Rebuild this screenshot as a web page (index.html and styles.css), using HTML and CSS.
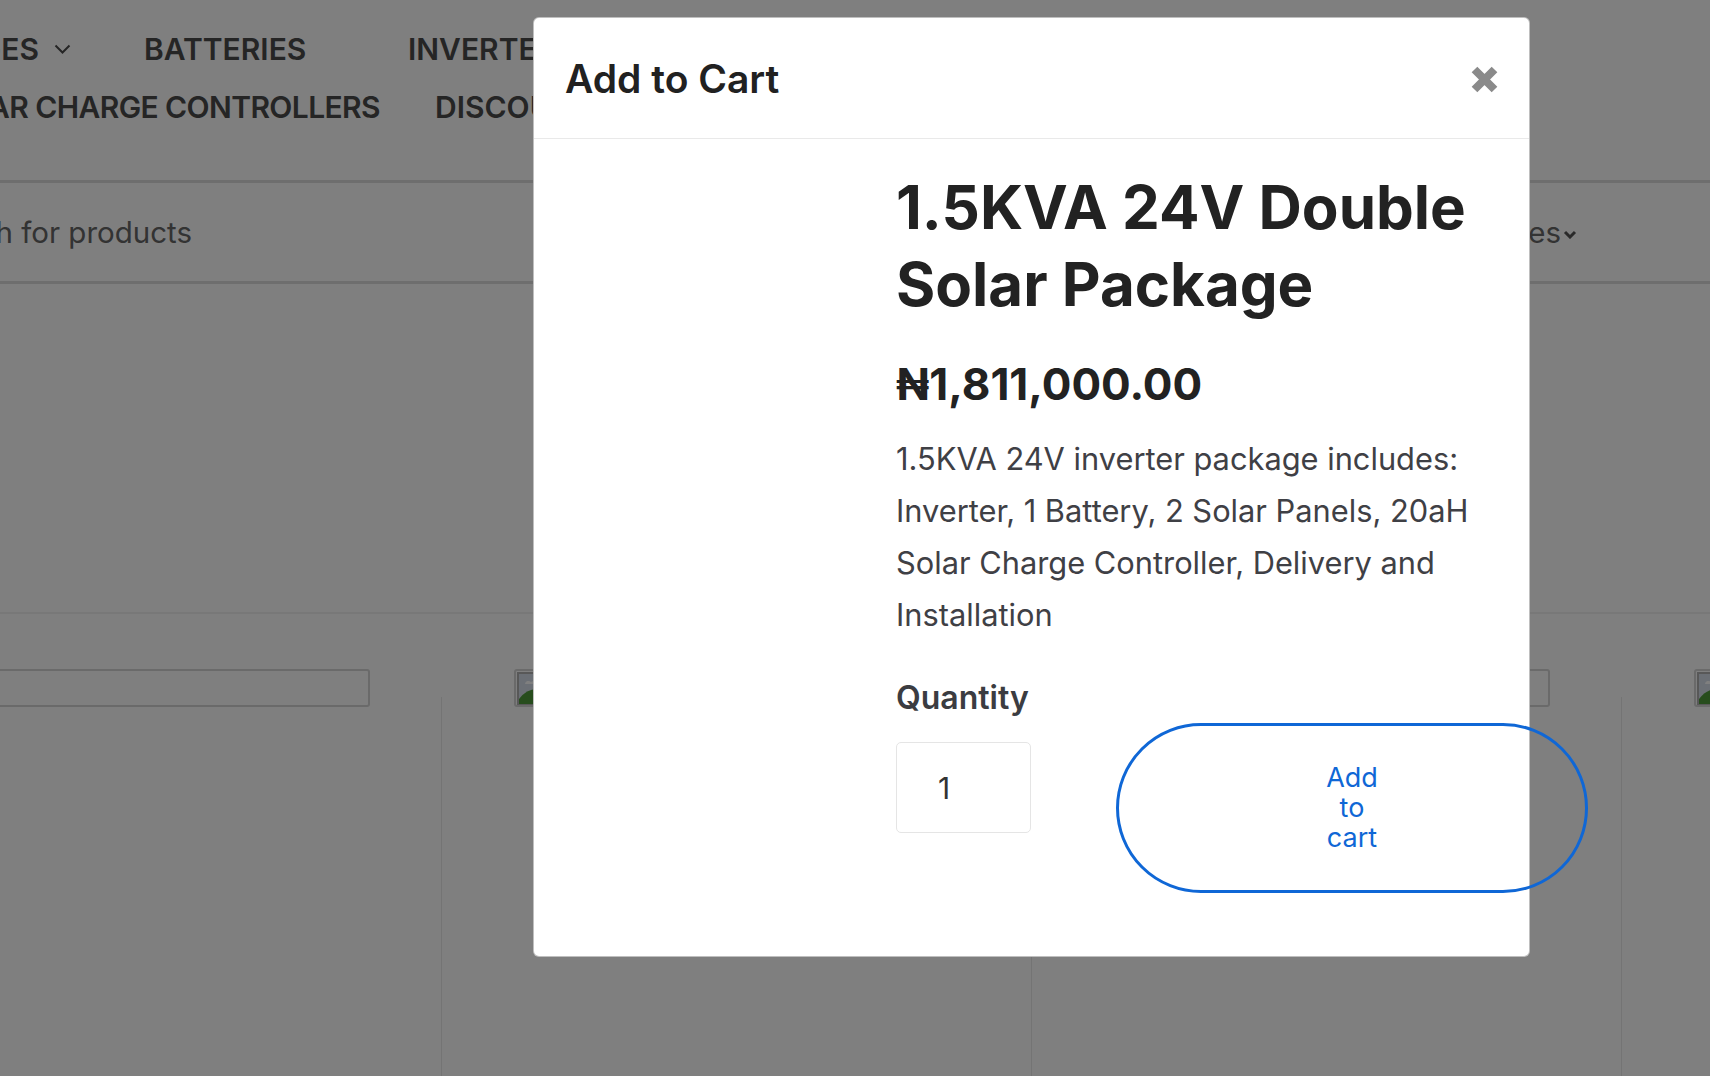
FILE: index.html
```html
<!DOCTYPE html>
<html lang="en">
<head>
<meta charset="utf-8">
<title>Add to Cart</title>
<link rel="stylesheet" href="styles.css">
</head>
<body>
<div class="page">
  <nav class="nav">
    <div class="nav-row">
      <div class="nav-lead lead1"><span>Solar Packages</span><svg class="chev" width="17" height="10" viewBox="0 0 17 10"><path d="M1.5 1.5 L8.5 8.5 L15.5 1.5" fill="none" stroke="#4a4a4a" stroke-width="2"/></svg></div>
      <a class="nav-item batt">Batteries</a>
      <a class="nav-item">Inverters</a>
    </div>
    <div class="nav-row">
      <div class="nav-lead lead2"><span>Solar Charge Controllers</span></div>
      <a class="nav-item">Discount Deals</a>
    </div>
  </nav>
  <div class="search-bar">
    <div class="search-lead">Search for products</div>
    <div class="cat">All Categories<svg class="chev-s" width="14" height="9" viewBox="0 0 14 9"><path d="M2 2 L7 7 L12 2" fill="none" stroke="#555" stroke-width="3"/></svg></div>
  </div>
  <div class="hero"></div>
  <div class="grid">
    <div class="col"><div class="pic"><svg class="broken" width="32" height="33" viewBox="0 0 32 33"><rect x="1" y="1" width="30" height="31" fill="#d6dfea" stroke="#b0b0b0" stroke-width="2"/><path d="M8 12 a3.5 3.5 0 0 1 6 -2 a3 3 0 0 1 5 2 z" fill="#fff"/><path d="M2 32 L2 27 Q10 16 22 17 L31 19 L31 32 z" fill="#4e9a3a"/></svg></div><div class="card"></div></div>
    <div class="col"><div class="pic"><svg class="broken" width="32" height="33" viewBox="0 0 32 33"><rect x="1" y="1" width="30" height="31" fill="#d6dfea" stroke="#b0b0b0" stroke-width="2"/><path d="M8 12 a3.5 3.5 0 0 1 6 -2 a3 3 0 0 1 5 2 z" fill="#fff"/><path d="M2 32 L2 27 Q10 16 22 17 L31 19 L31 32 z" fill="#4e9a3a"/></svg></div><div class="card"></div></div>
    <div class="col"><div class="pic"><svg class="broken" width="32" height="33" viewBox="0 0 32 33"><rect x="1" y="1" width="30" height="31" fill="#d6dfea" stroke="#b0b0b0" stroke-width="2"/><path d="M8 12 a3.5 3.5 0 0 1 6 -2 a3 3 0 0 1 5 2 z" fill="#fff"/><path d="M2 32 L2 27 Q10 16 22 17 L31 19 L31 32 z" fill="#4e9a3a"/></svg></div><div class="card"></div></div>
    <div class="col"><div class="pic"><svg class="broken" width="32" height="33" viewBox="0 0 32 33"><rect x="1" y="1" width="30" height="31" fill="#d6dfea" stroke="#b0b0b0" stroke-width="2"/><path d="M8 12 a3.5 3.5 0 0 1 6 -2 a3 3 0 0 1 5 2 z" fill="#fff"/><path d="M2 32 L2 27 Q10 16 22 17 L31 19 L31 32 z" fill="#4e9a3a"/></svg></div><div class="card"></div></div>
  </div>
</div>

<div class="backdrop"></div>

<div class="modal" role="dialog">
  <div class="modal-header">
    <h2 class="modal-title">Add to Cart</h2>
    <button class="close" aria-label="Close"><svg width="27" height="27" viewBox="0 0 27 27"><path d="M3.5 3.5 L23.5 23.5 M23.5 3.5 L3.5 23.5" stroke="#8a8a8a" stroke-width="8"/></svg></button>
  </div>
  <div class="modal-body">
    <div class="media"></div>
    <div class="info">
      <h1 class="product-title">1.5KVA 24V Double Solar Package</h1>
      <div class="price">₦1,811,000.00</div>
      <p class="desc">1.5KVA 24V inverter package includes: Inverter, 1 Battery, 2 Solar Panels, 20aH Solar Charge Controller, Delivery and Installation</p>
      <div class="cart-row">
        <div class="qty">
          <label class="qty-label" for="qty">Quantity</label>
          <input class="qty-input" id="qty" type="text" value="1">
        </div>
        <button class="add-btn"><span>Add to cart</span></button>
      </div>
    </div>
  </div>
</div>
</body>
</html>
```

FILE: styles.css
```css
* { box-sizing: border-box; }
html, body { margin: 0; padding: 0; }
body {
  width: 1710px;
  height: 1076px;
  overflow: hidden;
  position: relative;
  background: #fff;
  font-family: Inter, "Noto Sans", sans-serif;
}

.page { width: 1710px; height: 1076px; overflow: hidden; }

/* navigation */
.nav {
  padding: 20px 0 44px;
  border-bottom: 3px solid #dcdcdc;
}
.nav-row {
  display: flex;
  align-items: center;
  height: 58px;
  white-space: nowrap;
  font-size: 30px;
  font-weight: 600;
  color: #4a4a4a;
  text-transform: uppercase;
}
.nav-lead {
  flex: none;
  display: flex;
  justify-content: flex-end;
  align-items: center;
}
.lead1 { width: 144px; padding-right: 73px; }
.lead2 { width: 435px; padding-right: 55px; letter-spacing: -0.6px; }
.chev { margin-left: 15px; flex: none; }
.nav-item { color: inherit; text-decoration: none; flex: none; }
.batt { width: 264px; }

/* search */
.search-bar {
  display: flex;
  align-items: center;
  height: 101px;
  border-bottom: 3px solid #dcdcdc;
  font-size: 29.5px;
  color: #666;
  white-space: nowrap;
}
.search-lead {
  flex: none;
  width: 192px;
  display: flex;
  justify-content: flex-end;
}
.cat {
  margin-left: auto;
  margin-right: 133px;
  display: flex;
  align-items: center;
}
.chev-s { margin-left: 2px; margin-top: 4px; }

.hero {
  height: 330px;
  border-bottom: 2px solid #f0f0f0;
}

/* product grid */
.grid {
  display: grid;
  grid-template-columns: repeat(4, 590px);
  margin-left: -149px;
  padding-top: 55px;
}
.col {
  display: flex;
  flex-direction: column;
  height: 420px;
}
.pic {
  margin-left: 73px;
  width: 446px;
  height: 38px;
  border: 2px solid #d4d4d4;
  border-radius: 3px;
  padding: 1px;
  margin-bottom: -10px;
}
.broken { display: block; }
.card {
  flex: 1;
  border-left: 1px solid #e8e8e8;
}

/* overlay */
.backdrop {
  position: absolute;
  inset: 0;
  z-index: 10;
  background: rgba(0, 0, 0, 0.5);
}

.modal {
  position: absolute;
  z-index: 20;
  left: 533px;
  top: 17px;
  width: 997px;
  height: 940px;
  background: #fff;
  border: 1px solid rgba(0, 0, 0, 0.25);
  border-radius: 6px;
}
.modal-header {
  height: 121px;
  display: flex;
  align-items: center;
  justify-content: space-between;
  padding: 0 31px;
  border-bottom: 1px solid #e9e9e9;
}
.modal-title {
  margin: 0;
  font-size: 39px;
  font-weight: 600;
  color: #212121;
}
.close {
  border: 0;
  background: none;
  padding: 0;
  width: 27px;
  height: 27px;
  margin-top: 2px;
}
.close svg { display: block; }

.modal-body {
  display: grid;
  grid-template-columns: 362px 594px;
  padding-top: 30px;
}
.product-title {
  margin: 0;
  font-size: 60px;
  line-height: 77px;
  font-weight: 700;
  color: #222;
}
.price {
  margin-top: 35px;
  font-size: 44px;
  line-height: 53px;
  font-weight: 700;
  color: #222;
}
.desc {
  margin: 22px 0 0;
  font-size: 30.8px;
  line-height: 52px;
  color: #3f4045;
}
.cart-row {
  display: flex;
  align-items: flex-start;
  margin-top: 38px;
}
.qty { display: flex; flex-direction: column; flex: none; }
.qty-label {
  font-size: 32px;
  line-height: 38px;
  font-weight: 600;
  color: #3b3c41;
}
.qty-input {
  margin-top: 25px;
  width: 135px;
  height: 91px;
  border: 1px solid #e5e5e5;
  border-radius: 5px;
  padding: 0 0 0 41px;
  font-family: Inter, "Noto Sans", sans-serif;
  font-size: 30px;
  color: #333;
  background: #fff;
  outline: none;
}
.add-btn {
  flex: none;
  margin-left: 85px;
  margin-top: 44px;
  width: 472px;
  height: 170px;
  border: 3px solid #0f67d6;
  border-radius: 85px;
  background: transparent;
  color: #0f67d6;
  font-family: Inter, "Noto Sans", sans-serif;
  font-size: 27px;
  line-height: 30px;
  display: flex;
  align-items: center;
  justify-content: center;
  padding: 0;
}
.add-btn span {
  display: block;
  width: min-content;
  text-align: center;
}
```
